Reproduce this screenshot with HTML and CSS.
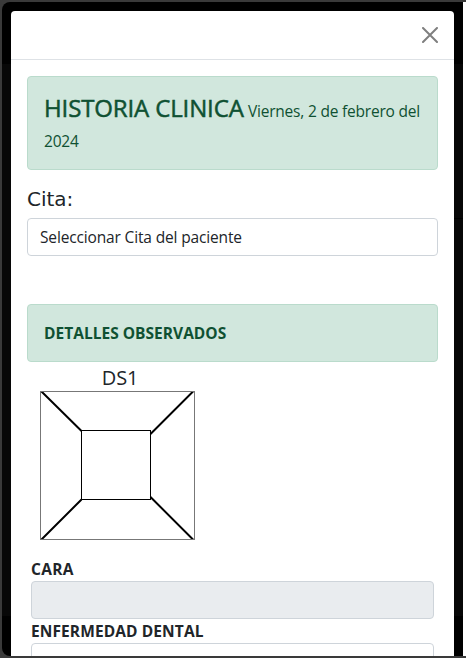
FILE: index.html
```html
<!DOCTYPE html>
<html lang="es">
<head>
<meta charset="utf-8">
<title>Historia Clinica</title>
<link rel="stylesheet" href="styles.css">
</head>
<body>
<div class="screen">
  <div class="backdrop">
    <main class="modal">
      <header class="modal-header">
        <button class="close" aria-label="Cerrar">
          <svg width="16" height="16" viewBox="0 0 16 16"><path d="M1 1L15 15M15 1L1 15" fill="none" stroke="currentColor" stroke-width="2" stroke-linecap="round"/></svg>
        </button>
      </header>
      <div class="modal-body">
        <div class="alert intro"><span class="title">HISTORIA CLINICA</span> <span class="date">Viernes, 2 de febrero del<br>2024</span></div>
        <label class="cita">Cita:</label>
        <div class="control select"><span class="placeholder">Seleccionar Cita del paciente</span></div>
        <div class="alert details"><span class="subtitle">DETALLES OBSERVADOS</span></div>
        <section class="tooth">
          <div class="tooth-name"><span>DS1</span></div>
          <svg class="tooth-map" width="155" height="149" viewBox="0 0 155 149">
            <g fill="none" stroke="#000">
              <path d="M1 0L41.500 40M153.500 0L110.500 43M1 149L41.500 108.500M153.500 149L110.500 106" stroke-width="2"/>
              <rect x="41.500" y="39.500" width="69" height="69"/>
              <rect x=".5" y=".5" width="154" height="148" stroke="#777"/>
            </g>
          </svg>
        </section>
        <section class="fields">
          <label class="field-label cara">CARA</label>
          <div class="control disabled"></div>
          <label class="field-label enfermedad">ENFERMEDAD DENTAL</label>
          <div class="control"></div>
        </section>
      </div>
    </main>
  </div>
</div>
</body>
</html>
```
FILE: styles.css
```css
* { box-sizing: border-box; }
body {
  margin: 0;
  background: #3a3a3a;
  color: #212529;
  font: 16px/24px "Open Sans", "Noto Sans", sans-serif;
}
.screen {
  height: 658px;
  padding: 2px 0 2px 2px;
  overflow: hidden;
  background: linear-gradient(#fff, #fff) right 0 top 2px / 3px 654px no-repeat #3a3a3a;
}
.backdrop {
  width: 461px;
  height: 654px;
  padding: 9px 9px 0;
  overflow: hidden;
  border-radius: 8px 0 0 8px;
  background:
    linear-gradient(#000, #000) right 0 top 216px / 9px 1px no-repeat,
    linear-gradient(#000 62px, #070707 62px, #070707 614px, #000 614px);
}
.modal {
  width: 443px;
  height: 645px;
  overflow: hidden;
  border-radius: 4px 4px 0 0;
  background: #fff;
}
.modal-header {
  display: flex;
  justify-content: flex-end;
  align-items: center;
  height: 49px;
  padding-right: 16px;
  border-bottom: 1px solid #dee2e6;
}
.close {
  display: flex;
  padding: 0;
  border: 0;
  background: none;
  color: #7f7f7f;
}
.modal-body { padding: 16px; }
.alert {
  padding: 16px;
  border: 1px solid #badbcc;
  border-radius: 4px;
  background: #d1e7dd;
  color: #0f5132;
  white-space: nowrap;
}
.intro { height: 94px; line-height: 30px; }
.title { font-size: 24px; font-weight: 500; letter-spacing: -.13px; -webkit-text-stroke: .5px currentColor; }
.date { font-size: 15.500px; letter-spacing: -.2px; }
.cita {
  display: block;
  height: 48px;
  padding-top: 14px;
  font: 20px/30px "DejaVu Sans", sans-serif;
}
.control {
  height: 38px;
  padding: 6px 12px;
  border: 1px solid #ced4da;
  border-radius: 4px;
  background: #fff;
}
.placeholder { font-size: 15.500px; letter-spacing: -.15px; }
.details { height: 58px; margin-top: 48px; }
.subtitle { font-size: 15.500px; font-weight: 700; letter-spacing: .02px; }
.tooth { width: 155px; margin-left: 13px; }
.tooth-name {
  height: 29px;
  padding-left: 5px;
  font-size: 20px;
  line-height: 32px;
  letter-spacing: -.2px;
  text-align: center;
}
.tooth-map { display: block; }
.fields { padding: 17px 4px 0; }
.field-label {
  display: block;
  height: 24px;
  font-size: 15.500px;
  font-weight: 700;
}
.cara { letter-spacing: .3px; }
.enfermedad { letter-spacing: .1px; }
.disabled { background: #e9ecef; }
```
